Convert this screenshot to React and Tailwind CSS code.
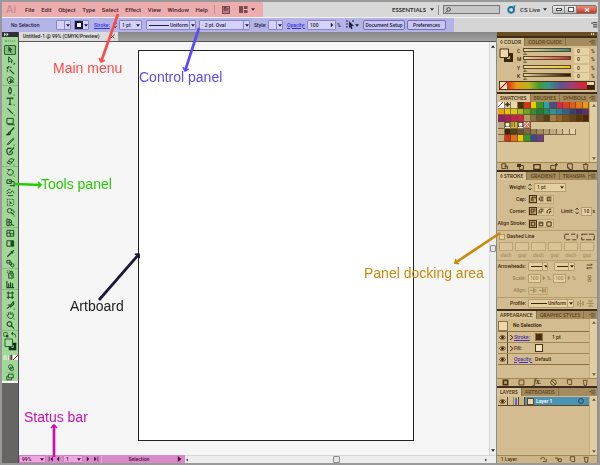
import clsx from "clsx";

const MENUS = ["File", "Edit", "Object", "Type", "Select", "Effect", "View", "Window", "Help"];

// each tool is drawn on a 10x10 grid; f = filled shape, s = stroked lines
const TOOL_GROUPS = [
  [
    { name: "Selection", f: "M3 0 L8 5 L5.8 5.2 L7 8 L5.8 8.6 L4.6 5.8 L3 7.4 Z" },
    { name: "Direct Selection", s: "M3 1 L7.5 5.5 L5.5 5.6 L6.5 8 M3 1 L3 7 L4.6 5.6 M8 9 L9.5 9 L9.5 7.5" },
    { name: "Magic Wand", s: "M4 4 L9 9 M3 0 V2 M1 3 H2.5 M5 2 L6 1 M1 1 L2 2 M2 5 L1 6", w: 1.3 },
    { name: "Lasso", s: "M2 6 C0 2 4 0 6.5 1.5 C10 3 8 6 5 6 C2 6 2 8 4 8.5 M5 3 L5 8 L6.5 6.8 L8.5 7 Z" },
  ],
  [
    { name: "Pen", s: "M4.5 0 C2.5 3 2.5 4 3 6 H6 C6.5 4 6.5 3 4.5 0 V4 M3 7.5 H6 M8.5 9 H9.5" },
    { name: "Type", s: "M1.5 2.5 V1.2 H7.5 V2.5 M4.5 1.2 V8 M3 8.2 H6 M8.5 9 H9.5", w: 1.3 },
    { name: "Line Segment", s: "M1.5 1.5 L7.5 7.5 M8.5 9 H9.5", w: 1.2 },
    { name: "Rectangle", s: "M1 1.5 H8 V7.5 H1 Z M2 8.5 H9 M8.5 9 H9.5" },
    { name: "Paintbrush", s: "M9 0.5 L4.5 5.5 M4.5 5.5 C3 5.5 3 7.5 1 8.5 C4 9 5.5 7.5 4.5 5.5", w: 1.5 },
    { name: "Pencil", s: "M8.5 1 L2.5 6.5 L1.5 8.5 L3.5 7.7 L9 2 M8.5 9 H9.5" },
    { name: "Blob Brush", s: "M9 0.5 L5 5 L3.5 6.5 M6 1.5 H2 C0 3 1 8 3 8.5 C6 9 7.5 7 7.5 5", w: 1.3 },
    { name: "Eraser", s: "M5.5 1.5 L9 3 L5 8 L1.2 6.5 Z M3 4.5 L6.8 6 M8.5 9 H9.5" },
  ],
  [
    { name: "Rotate", s: "M3 2 C6 0.5 8.5 3 8 5.5 C7 9 1.5 8.5 1.5 5 M1.5 1.5 L3.5 2 L2.5 3.8 M8.5 9 H9.5" },
    { name: "Scale", s: "M1 2 H6 V6 H1 Z M3 4 H9 V8.5 H4 M8.5 9 H9.5" },
    { name: "Width", s: "M1 7 C3 2 4 8 6 4 C7 2 8 4 9 6 M1 4 C3 0 4 3 5 1 M2 8.5 L8 8.5" },
    { name: "Free Transform", s: "M1.5 1.5 H8.5 M1.5 8.5 H8.5 M1.5 1.5 V8.5 M8.5 1.5 V8.5", dash: "1.2 1.2", f: "M4 3 L7 6 L5.3 6.2 L4 7.5 Z" },
    { name: "Shape Builder", s: "M4 5.5 A2.5 2.5 0 1 1 6.5 3 M5 5 A2 2 0 1 0 5.5 3 M5 4 L9 8 M8.5 9 H9.5" },
    { name: "Perspective Grid", s: "M1 1 L6 2.5 V8 L1 8.5 Z M1 4.5 L6 5 M3.5 2 V8 M6 7 L9 8.5" },
  ],
  [
    { name: "Mesh", s: "M1 1.5 H8.5 V8 H1 Z M1 5 C3 3 6 7 8.5 4.5 M4.5 1.5 C3 4 6 6 4.5 8" },
    { name: "Gradient", s: "M1 2 H8.5 V8 H1 Z", f: "M5 2 H8.5 V8 H5 Z" },
    { name: "Eyedropper", s: "M7 3 L2.5 7.5 L1.5 8.5 M5.5 2.5 L7.8 4.8 M7 3.2 L8.8 1.2", w: 1.5 },
    { name: "Blend", s: "M1 1.5 H4.5 V4.5 H1 Z M3.5 3.5 H6 V6 H3.5 M8.8 7 A1.7 1.7 0 1 1 5.4 7 A1.7 1.7 0 1 1 8.8 7" },
  ],
  [
    { name: "Symbol Sprayer", s: "M3 3.5 H8 V9 H3 Z M4.5 3.5 V1.5 H7 V3.5 M1 1 H2 M1 3 H2 M4 0.8 H3 M4.5 5.5 H6.5 V7.5" },
    { name: "Column Graph", s: "M1 1 V8.5 H9 M3 8 V4 M5 8 V2.5 M7.2 8 V3.5", w: 1.3 },
  ],
  [
    { name: "Artboard", s: "M2.5 0.5 V9 M7 0.5 V9 M0.8 2.2 H8.8 M0.8 7 H8.8" },
    { name: "Slice", s: "M8.5 0.5 L4 6 L1 8.5 M8.5 0.5 V3.5 L4.5 7 M2 4.5 H5 M8.5 9 H9.5", w: 1.2 },
    { name: "Hand", s: "M2 6 L1 4 M2 6 C3 9 7 9 8 6 L8 3 M3 4.5 L2.5 1.5 M4.8 4 V0.8 M6.5 4.2 L7 1.5 M8.5 9 H9.5" },
    { name: "Zoom", s: "M6.5 3.3 A2.6 2.6 0 1 1 1.3 3.3 A2.6 2.6 0 1 1 6.5 3.3 M5.8 5.3 L9 8.5", w: 1.3 },
  ],
];

const SWATCH_ROWS = [
  ["#fff", "#d8cfae", "#ecd9a8", "#4b2e0c", "#d3341c", "#eacb00", "#33982e", "#2fa0ac", "#4b4d86", "#cf2b4d", "#d8402a", "#e05a18", "#e5791a", "#e89a14"],
  ["#e9a30c", "#e6c400", "#d4cb12", "#a9bf1c", "#64a529", "#2f9132", "#1d7b3c", "#1e8c63", "#2a979a", "#2d7f9f", "#2f5f93", "#34407e", "#3c2d66", "#5b2f70"],
  ["#8a2368", "#a8205e", "#c3244f", "#d0264a", "#b69a68", "#8a7046", "#6e562f", "#574018", "#a77b46", "#91652f", "#7c521f", "#6b4314", "#5a360d", "#4a2a08"],
  ["#bda986", "#f6efd6", "#e0b02e", "#f0e7ee", "#dc7a68"],
  ["#c9b48a", "#3c260a", "#54401f", "#685431", "#7a6743", "#8d7a55", "#9f8c66", "#af9c75", "#beab83", "#cdba90", "#dac79d", "#e6d4aa"],
  ["#c9b48a", "#d3341c", "#e46e1a", "#eacb00", "#33982e", "#3a4a8c", "#6b3f86"],
];

const CHANNELS = [
  { key: "C", track: "bg-linear-to-r from-[#e6d3a6] to-[#1f9090]" },
  { key: "M", track: "bg-linear-to-r from-[#e6d3a6] to-[#c81444]" },
  { key: "Y", track: "bg-linear-to-r from-[#e6d3a6] to-[#eecb00]" },
  { key: "K", track: "bg-linear-to-r from-[#e6d3a6] to-[#2c1804]" },
];

function Glyph({ s, f, w = 1.1, dash, size = 10, className }) {
  return (
    <svg viewBox="0 0 10 10" width={size} height={size} className={clsx("shrink-0", className)} aria-hidden="true">
      {f && <path d={f} fill="currentColor" />}
      {s && <path d={s} fill="none" stroke="currentColor" strokeWidth={w} strokeDasharray={dash} />}
    </svg>
  );
}

function Caret({ className }) {
  return (
    <svg viewBox="0 0 5 3" width="4" height="3" className={clsx("shrink-0", className)} aria-hidden="true">
      <path d="M0 0 H5 L2.5 3 Z" fill="currentColor" />
    </svg>
  );
}

function Spinner() {
  return (
    <svg viewBox="0 0 4 8" width="4" height="8" className="shrink-0" aria-hidden="true">
      <path d="M0.5 3 L2 1 L3.5 3 M0.5 5 L2 7 L3.5 5" fill="none" stroke="currentColor" strokeWidth="0.8" />
    </svg>
  );
}

function Picker({ label, value, className, line, divided }) {
  return (
    <span className={clsx("flex shrink-0 items-center overflow-hidden rounded-[1px] border pl-[2px]", className)}>
      {line && <span className={clsx("h-px shrink-0 bg-current", line)} />}
      <select aria-label={label} defaultValue={value} className="min-w-0 flex-1 appearance-none bg-transparent outline-none">
        <option>{value}</option>
      </select>
      <span className={clsx("flex h-full w-[6px] shrink-0 items-center justify-center", divided && "border-l border-inherit")}>
        <Caret />
      </span>
    </span>
  );
}

function MenuBar() {
  return (
    <header className="flex h-[15px] shrink-0 items-stretch bg-[#d8d8d8] text-[6px]">
      <nav className="flex w-[261px] shrink-0 items-center bg-[#ebadad] pl-[4px] text-[#4f2626]">
        <span className="w-[19px] text-[11px] leading-none text-[#c98e8e]">Ai</span>
        <div className="flex w-[183px] justify-between">
          {MENUS.map((m) => (
            <button key={m}>{m}</button>
          ))}
        </div>
        <span className="ml-[6px] h-[9px] w-px bg-[#c98a8a]" />
        <button aria-label="Bridge" className="ml-[7px] flex h-[8px] w-[8px] items-center justify-center border border-[#7c4a4a] bg-[#b98080] text-[5px] leading-none">
          Br
        </button>
        <button aria-label="Arrange documents" className="ml-[9px] flex items-center gap-[3px]">
          <Glyph size={9} f="M0 1 H4.5 V9 H0 Z M5.5 1 H9.5 V4.5 H5.5 Z M5.5 5.5 H9.5 V9 H5.5 Z" className="text-[#7c4a4a]" />
          <Caret />
        </button>
      </nav>

      <div className="flex flex-1 items-center justify-end text-[#333]">
        <button className="flex items-center gap-[4px] font-[Lato] font-bold">
          ESSENTIALS <Caret />
        </button>
        <span className="ml-[4px] h-[10px] w-px bg-[#8f8f8f]" />
        <label className="ml-[4px] flex h-[9px] w-[57px] items-center border border-[#777] bg-[#c6c6c6] pl-px">
          <Glyph size={6} w={1.4} s="M9 4 A3 3 0 1 1 3 4 A3 3 0 1 1 9 4 M4 6.5 L1 9.5" />
          <input aria-label="Search" className="w-full min-w-0 bg-transparent outline-none" />
        </label>
        <svg viewBox="0 0 10 10" width="9" height="9" className="ml-[7px] shrink-0" aria-hidden="true">
          <circle cx="4.6" cy="5.4" r="3.2" fill="none" stroke="#15719f" strokeWidth="2" />
          <path d="M7 0.5 L9.5 0.5 L8.5 3.5" fill="#15719f" />
        </svg>
        <button className="ml-[4px] flex items-center gap-[3px]">
          CS Live <Caret />
        </button>
        <div className="mr-px ml-[5px] flex h-[9px] w-[45px] shrink-0 overflow-hidden rounded-[2px] border border-[#777]">
          <button aria-label="Minimize" className="flex w-[12px] items-center justify-center border-r border-[#888] bg-linear-to-b from-[#eee] to-[#b9b9b9]">
            <span className="h-[3px] w-[6px] border border-[#555] bg-white" />
          </button>
          <button aria-label="Restore" className="flex w-[12px] items-center justify-center border-r border-[#888] bg-linear-to-b from-[#eee] to-[#b9b9b9]">
            <span className="h-[5px] w-[6px] border border-[#555] bg-white" />
          </button>
          <button aria-label="Close" className="flex flex-1 items-center justify-center bg-linear-to-b from-[#eb8a78] to-[#c83214] text-white">
            <Glyph size={6} w={2} s="M1.5 2 L8.5 8 M8.5 2 L1.5 8" />
          </button>
        </div>
      </div>
    </header>
  );
}

function ControlPanel() {
  const field = "h-[10px] border-[#8a86c4] bg-[#d4d1fb]";
  return (
    <div className="flex h-[15px] shrink-0 items-stretch border-t border-[#f2f2f2] bg-[#d5d5d5]">
      <div className="flex w-[452px] shrink-0 items-center bg-[#b4b3e6] pl-[9px] whitespace-nowrap text-[#1c1c40]">
        <span className="w-[45px]">No Selection</span>
        <Picker label="Fill" value="" divided className={clsx(field, "w-[15px]")} />
        <button aria-label="Stroke color" className={clsx(field, "ml-[3px] flex w-[15px] items-center gap-px rounded-[1px] border")}>
          <span className="h-[8px] w-[8px] border-2 border-[#15153a] bg-white" />
          <Caret />
        </button>
        <a href="#stroke" className="ml-[5px] w-[19px] text-[#3532f0] underline">Stroke:</a>
        <Spinner />
        <Picker label="Stroke weight" value="1 pt" className={clsx(field, "ml-[2px] w-[23px]")} />
        <Picker label="Width profile" value="Uniform" line="mr-px w-[20px]" divided className={clsx(field, "ml-[4px] w-[50px]")} />
        <Picker label="Brush" value="·  2 pt. Oval" divided className={clsx(field, "ml-[3px] w-[51px]")} />
        <span className="ml-[4px] w-[14px]">Style:</span>
        <Picker label="Style" value="" divided className={clsx(field, "w-[15px]")} />
        <a href="#opacity" className="ml-[4px] w-[20px] text-[#3532f0] underline">Opacity:</a>
        <label className={clsx(field, "flex w-[29px] items-center rounded-[1px] border pl-[2px]")}>
          <input aria-label="Opacity" defaultValue="100" className="w-full min-w-0 bg-transparent outline-none" />
          <Glyph size={6} f="M3 1 L7 5 L3 9 Z" />
        </label>
        <span className="w-[9px] pl-px">%</span>
        <button aria-label="Select similar objects" className="flex w-[15px] items-center">
          <Glyph size={10} s="M1 1 H3 M1 4 H3 M7 1 H9 M1 7 H3" f="M4 1 L9 6 L6.6 6.3 L7.5 9 L6 9 L5.3 6.8 L4 8 Z" />
          <Caret />
        </button>
        <button className="ml-[3px] h-[10px] w-[42px] rounded-[2px] border border-[#7370ae] bg-[#c9c6f7]">Document Setup</button>
        <button className="ml-[2px] h-[10px] w-[39px] rounded-[2px] border border-[#7370ae] bg-[#c9c6f7]">Preferences</button>
      </div>
      <button aria-label="Panel menu" className="ml-auto">
        <Glyph size={7} s="M3 1 H9 M3 4 H9 M3 7 H9" f="M0 1 H3 L1.5 3 Z" />
      </button>
    </div>
  );
}

function ToolsPanel() {
  return (
    <aside className="flex w-[17px] shrink-0 flex-col border-r border-[#4b4960] bg-[#666563]">
      <div className="flex h-[5px] shrink-0 items-center bg-[#2f2f37] pl-[2px] text-[#ddd]">
        <Glyph size={5} f="M0 1 L4 5 L0 9 Z M5 1 L9 5 L5 9 Z" />
      </div>
      <div className="flex shrink-0 flex-col items-center border-b-2 border-white bg-[#a1d898] text-[#1d4a22]">
        <div className="flex h-[8px] items-center">
          <span className="h-[2px] w-[10px] border-y border-dotted border-[#76b06f]" />
        </div>
        {TOOL_GROUPS.map((group, g) => (
          <div key={g} className="flex w-full flex-col items-center border-b border-[#86bd7f]">
            {group.map((tool) => (
              <button
                key={tool.name}
                aria-label={tool.name}
                className={clsx(
                  "flex h-[10px] w-[12px] items-center justify-center",
                  tool.name === "Selection" && "rounded-[1px] border border-[#2e6233] bg-[#84bd7d]"
                )}
              >
                <Glyph {...tool} size={tool.name === "Selection" ? 8 : 9} />
              </button>
            ))}
          </div>
        ))}
        <div className="flex h-[7px] items-center gap-[2px]">
          <Glyph size={6} s="M1 1 H7 V7 H1 Z" f="M5 5 H9 V9 H5 Z" />
          <Glyph size={6} w={1.6} s="M1 3 C5 1 8 4 8 9 M3 0 L1 3 L4 5" />
        </div>
        <svg viewBox="0 0 13 13" width="13" height="13" aria-hidden="true">
          <path d="M6 6 H11 V11 H6 Z" fill="none" stroke="#16301a" strokeWidth="2.6" />
          <path d="M1 1 H8.5 V8.5 H1 Z" fill="#a9dc9f" stroke="#2e6233" />
        </svg>
        <div className="mt-[3px] flex h-[6px] items-center gap-px">
          <span className="h-[5px] w-[4px] bg-[#c3e8b9]" />
          <span className="h-[5px] w-[4px] bg-linear-to-r from-white to-[#333]" />
          <Glyph size={5} w={2} s="M0 10 L10 0" className="bg-white text-red-600" />
        </div>
        <button aria-label="Drawing mode" className="mt-[2px] flex h-[10px] items-center">
          <Glyph size={7} s="M8 4 A3 3 0 1 0 2 4 A3 3 0 1 0 8 4 M4.5 4.5 H9 V9 H4.5 Z" />
        </button>
        <button aria-label="Screen mode" className="flex h-[9px] items-center border-t border-[#86bd7f]">
          <Glyph size={8} s="M3 1.5 H9 V6 H3 Z M3 4 H1 V8.5 H7 V6" />
        </button>
      </div>
    </aside>
  );
}

function Panel({ tabs, children, grow }) {
  return (
    <section className={clsx("flex flex-col border-t-2 border-[#3f2c1c] bg-[#d3bc90]", grow ? "min-h-0 flex-1" : "shrink-0")}>
      <div className="flex h-[8px] shrink-0 items-stretch overflow-hidden bg-[#a58c5e] font-[Lato] leading-[8px] font-bold whitespace-nowrap text-[#5f471f]">
        {tabs.map((t, i) => (
          <button
            key={t}
            className={clsx("min-w-0 shrink-0 border-r border-[#8a7244] px-[3px]", i === 0 && "bg-[#d9c398] text-[#4a3312]")}
          >
            {t}
          </button>
        ))}
        <button aria-label="Panel menu" className="sticky right-0 ml-auto bg-[#a58c5e] pr-px">
          <Glyph size={7} s="M3 2 H9 M3 4.5 H9 M3 7 H9" f="M0 3 H3 L1.5 5 Z" />
        </button>
      </div>
      {children}
    </section>
  );
}

function ColorPanel() {
  return (
    <Panel tabs={["◊ COLOR", "COLOR GUIDE"]}>
      <div className="flex h-[35px]">
        <svg viewBox="0 0 16 18" width="16" height="18" className="mt-[2px] ml-[2px] shrink-0" aria-hidden="true">
          <path d="M6.5 6.5 H12.5 V12.5 H6.5 Z" fill="none" stroke="#3f2508" strokeWidth="3" />
          <path d="M1 1 H9.5 V9.5 H1 Z" fill="#ecd8ab" stroke="#4a3312" />
        </svg>
        <div className="flex flex-1 flex-col pt-px pl-[2px]">
          {CHANNELS.map((c) => (
            <div key={c.key} className="flex flex-1 items-center">
              <span className="w-[6px]">{c.key}</span>
              <div className="flex flex-1 flex-col items-start">
                <div className={clsx("h-[4px] w-full border border-[#5f471f]", c.track)} />
                <svg viewBox="0 0 4 3" width="4" height="3" aria-hidden="true">
                  <path d="M0.5 2.5 L2 0.5 L3.5 2.5 Z" fill="#ecd8ab" stroke="#4a3312" strokeWidth="0.6" />
                </svg>
              </div>
              <input aria-label={c.key} defaultValue="0" className="ml-[3px] h-[7px] w-[15px] bg-[#e6d2a5] pl-[3px] outline-none" />
              <span className="w-[8px] pl-[2px]">%</span>
            </div>
          ))}
        </div>
      </div>
      <div className="mx-[2px] mb-[2px] flex h-[9px] border border-[#4a3312]">
        <Glyph size={7} w={1.5} s="M0 10 L10 0" className="bg-[#f4e6c4] text-red-700" />
        <div className="flex-1 bg-[linear-gradient(90deg,#dd2a18,#e79a18_12%,#b7b41c_27%,#4c9a2e_40%,#2f9a8a_52%,#5b5590_66%,#a53c72_82%,#e2202e)]" />
        <div className="w-[7px] bg-linear-to-b from-[#ecd8ab] from-50% to-[#3a2205] to-50%" />
      </div>
    </Panel>
  );
}

function SwatchesPanel() {
  return (
    <Panel tabs={["SWATCHES", "BRUSHES", "SYMBOLS"]}>
      <div className="flex h-[60px] bg-[#d8c497]">
        <div className="flex h-[40px] flex-1 flex-col pl-px">
          {SWATCH_ROWS.map((row, r) => (
            <div key={r} className="grid flex-1 grid-cols-14">
              {row.map((color, i) => (
                <button
                  key={i}
                  aria-label={`Swatch ${color}`}
                  className="border-r border-b border-[#5f471f]/70"
                  style={{ backgroundColor: color }}
                >
                  {r === 0 && i === 0 && <Glyph size={5} w={1.8} s="M0 10 L10 0" className="text-red-700" />}
                  {r === 0 && i === 1 && <Glyph size={5} w={1.6} s="M5 0 V10 M0 5 H10 M2 5 A3 3 0 1 1 8 5 A3 3 0 1 1 2 5" />}
                  {r === 3 && (i === 1 || i === 3) && <Glyph size={5} w={2.5} s="M0 0 H10 V10 H0 Z" />}
                  {r === 3 && i === 2 && <Glyph size={5} w={2} s="M2 0 V10 M7 0 V10" className="text-[#4c7a2e]" />}
                  {r === 3 && i === 4 && <Glyph size={5} w={2} s="M0 0 L10 10 M10 0 L0 10" className="text-[#f5e3d0]" />}
                </button>
              ))}
            </div>
          ))}
        </div>
        <ScrollTrack />
      </div>
      <Footer>
        <Glyph size={8} s="M1 1 H6 V7 H1 Z M4 4 H8 V8 M9 9 H10" />
        <Glyph size={8} s="M3 3 H8 V8 H3 Z" f="M0 1 H5 V5 H0 Z" />
        <Glyph size={8} w={1.6} s="M1 2 H9 V8 H1 Z" />
        <Glyph size={8} s="M1 3 H7 V8 H1 Z M8 0 V4 M6 2 H10" />
        <Glyph size={8} s="M2 1 H8 V8 H4 L2 6 Z M4 8 V6 H2" />
        <Glyph size={8} s="M1 2 H8 M2 3 L3 9 H6.5 L7 3 M3.5 1 H6" />
      </Footer>
    </Panel>
  );
}

function ScrollTrack() {
  return (
    <div className="flex w-[8px] shrink-0 flex-col items-center justify-between border-l border-[#c4ab7c] bg-[#e0cda1] py-[2px] text-[#6e562f]">
      <Caret className="rotate-180" />
      <Caret />
    </div>
  );
}

function Footer({ children, note }) {
  return (
    <div className="flex h-[8px] shrink-0 items-center justify-around border-t border-[#a08856] bg-[#cdb485] pr-[3px] text-[#4a3312]">
      {note && <span className="mr-[16px]">{note}</span>}
      {children}
    </div>
  );
}

function IconTrio({ paths, name }) {
  return (
    <div className="ml-[2px] flex h-[9px] w-[26px] items-center justify-around border border-[#bfa674] bg-[#dcc79b]">
      {paths.map((p, i) => (
        <button key={i} aria-label={`${name} ${i + 1}`} className={clsx("flex h-[8px] w-[8px] items-center justify-center", i === 0 && "border border-[#4a3312] bg-[#c1a877]")}>
          <Glyph size={6} w={1.6} s={p} />
        </button>
      ))}
    </div>
  );
}

function StrokePanel() {
  const label = "w-[29px] shrink-0 text-right";
  const box = "h-[9px] border-[#b59c6a] bg-[#e4d0a3]";
  const corners = ["M2 9 V2 H9 M5 9 V5 H9", "M2 9 V4 L4 2 H9 M5 9 V5 H9", "M2 9 L2 5 L5 2 H9 M6 9 V6 H9"];
  return (
    <Panel tabs={["◊ STROKE", "GRADIENT", "TRANSPA"]}>
      <div className="whitespace-nowrap">
        <div className="flex h-[13px] items-center pt-px">
          <label htmlFor="weight" className={label}>Weight:</label>
          <span className="mx-[2px]"><Spinner /></span>
          <span className={clsx(box, "flex w-[32px] items-center border pr-px pl-[2px]")}>
            <select id="weight" className="min-w-0 flex-1 appearance-none bg-transparent outline-none">
              <option>1 pt</option>
            </select>
            <Caret />
          </span>
        </div>
        <div className="flex h-[12px] items-center">
          <span className={label}>Cap:</span>
          <IconTrio name="Cap" paths={["M3 2 H9 V4 M3 2 V8 M5 4 V9", "M9 2 H4 C1 3 1 7 4 8 H9 M4 5 H9", "M9 2 H2 V8 H9 M4 5 H9"]} />
        </div>
        <div className="flex h-[12px] items-center">
          <span className={label}>Corner:</span>
          <IconTrio name="Corner" paths={corners} />
          <label htmlFor="limit" className="mr-px ml-[7px]">Limit:</label>
          <Spinner />
          <input id="limit" defaultValue="10" className={clsx(box, "ml-[2px] w-[11px] border pl-[2px] outline-none")} />
          <span className="ml-px">x</span>
        </div>
        <div className="flex h-[13px] items-center">
          <span className={label}>Align Stroke:</span>
          <IconTrio name="Align stroke" paths={["M2 2 H8 V8 H2 Z", "M2 2 H8 V8 H2 Z M4 4 H6", "M1.5 1.5 H8.5 V8.5 H1.5 Z"]} />
        </div>

        <div className="flex h-[12px] items-center border-t border-[#b59c6a] px-[2px]">
          <label className="flex items-center gap-[2px]">
            <input type="checkbox" className="h-[6px] w-[6px] appearance-none border border-[#b0976a] bg-[#e4d0a3]" />
            Dashed Line
          </label>
          <Glyph size={14} dash="3 1.5" w={0.6} s="M0.5 3 H9.5 V7 H0.5 Z" className="ml-auto" />
          <Glyph size={14} dash="4 1" w={0.6} s="M0.5 3 H9.5 V7 H0.5 Z" className="ml-[3px]" />
        </div>
        <div className="grid grid-cols-6 gap-[2px] pr-[3px] pl-[2px] text-center text-[#ab925f]">
          {["dash", "gap", "dash", "gap", "dash", "gap"].map((t, i) => (
            <label key={i} className="flex flex-col leading-[8px]">
              <input disabled aria-label={t} className="h-[9px] w-full min-w-0 border border-[#bda473] bg-[#d9c497]" />
              {t}
            </label>
          ))}
        </div>

        <div className="mt-px flex h-[12px] items-center border-t border-[#b59c6a]">
          <span className={label}>Arrowheads:</span>
          <Picker label="Start arrowhead" value="" line="w-[11px]" divided className={clsx(box, "ml-[2px] w-[20px]")} />
          <Picker label="End arrowhead" value="" line="w-[11px]" divided className={clsx(box, "ml-[6px] w-[21px]")} />
          <Glyph size={7} s="M1 3 H9 L7 1 M9 7 H1 L3 9" className="mr-[4px] ml-auto" />
        </div>
        <div className="flex h-[12px] items-center text-[#9c8350]">
          <span className={label}>Scale:</span>
          <input aria-label="Start scale" defaultValue="100" className={clsx(box, "ml-[2px] w-[13px] border pl-px")} />
          <Glyph size={6} f="M3 1 L7 5 L3 9 Z" />
          <span className="w-[6px]">%</span>
          <input aria-label="End scale" defaultValue="100" className={clsx(box, "w-[13px] border pl-px")} />
          <Glyph size={6} f="M3 1 L7 5 L3 9 Z" />
          <span>%</span>
          <Glyph size={7} w={1.4} s="M3 1 H7 V4 H3 Z M3 6 H7 V9 H3 Z M5 3 V7" className="mr-[4px] ml-auto" />
        </div>
        <div className="flex h-[13px] items-center text-[#9c8350]">
          <span className={label}>Align:</span>
          <div className="ml-[2px] flex h-[8px] w-[20px] items-center justify-around border border-[#bda473]">
            <Glyph size={7} s="M0 5 H7 M5 2 L9 5 L5 8 Z" />
            <Glyph size={7} s="M0 5 H7 M5 2 L9 5 L5 8 Z M9.5 1 V9" />
          </div>
        </div>
        <div className="flex h-[12px] items-center border-t border-[#b59c6a]">
          <span className={label}>Profile:</span>
          <Picker label="Profile" value="Uniform" line="mr-px w-[16px]" divided className={clsx(box, "ml-[2px] w-[46px]")} />
          <Glyph size={7} s="M5 0 V10 M1 2 V8 L3.5 5 Z M9 2 V8 L6.5 5 Z" className="ml-[3px] text-[#9c8350]" />
          <Glyph size={7} s="M0 5 H10 M2 1 H8 L5 3.5 Z M2 9 H8 L5 6.5 Z" className="ml-[3px] text-[#9c8350]" />
        </div>
      </div>
    </Panel>
  );
}

function Eye() {
  return (
    <button aria-label="Toggle visibility" className="flex h-full w-[10px] shrink-0 items-center justify-center border-r border-[#5f471f]">
      <Glyph size={7} s="M0.5 5 C2.5 1.5 7.5 1.5 9.5 5 C7.5 8.5 2.5 8.5 0.5 5 Z" f="M3 5 A2 2 0 1 1 7 5 A2 2 0 1 1 3 5" />
    </button>
  );
}

function AppearancePanel() {
  return (
    <Panel tabs={["APPEARANCE", "GRAPHIC STYLES"]}>
      <div className="flex h-[59px]">
        <div className="flex flex-1 flex-col pt-px pl-px">
          <div className="flex h-[12px] items-center border-b border-[#8a7244] font-bold">
            <span className="mr-[5px] h-[10px] w-[10px] border border-[#8a7244] bg-[#ecd8ab]" />
            No Selection
          </div>
          <div className="flex h-[11px] items-center border-b border-[#a08856]">
            <Eye />
            <Glyph size={5} w={2} s="M2 0 L8 5 L2 10" className="ml-px" />
            <a href="#stroke" className="w-[21px] text-[#4b2fb0] underline">Stroke:</a>
            <span className="h-[8px] w-[8px] border border-[#8a7244] bg-[#4b2e0c]" />
            <span className="ml-[9px]">1 pt</span>
          </div>
          <div className="flex h-[11px] items-center border-b border-[#a08856]">
            <Eye />
            <Glyph size={5} w={2} s="M2 0 L8 5 L2 10" className="ml-px" />
            <span className="w-[21px]">Fill:</span>
            <span className="h-[8px] w-[8px] border border-[#4a3312] bg-[#f2e2bd]" />
          </div>
          <div className="flex h-[11px] items-center border-b border-[#8a7244]">
            <Eye />
            <a href="#opacity" className="ml-[6px] w-[21px] text-[#4b2fb0] underline">Opacity:</a>
            <span>Default</span>
          </div>
        </div>
        <ScrollTrack />
      </div>
      <Footer>
        <Glyph size={7} w={2.4} s="M2 2 H8 V8 H2 Z" />
        <Glyph size={7} s="M1.5 1.5 H8.5 V8.5 H1.5 Z" />
        <span className="font-serif text-[7px] leading-none font-bold italic">fx.</span>
        <Glyph size={7} s="M1 5 A4 4 0 1 1 9 5 A4 4 0 1 1 1 5 M2 2 L8 8" />
        <Glyph size={7} s="M2 1 H8 V8 H4 L2 6 Z" />
        <Glyph size={7} s="M1 2 H8 M2 3 L3 9 H6.5 L7 3" />
      </Footer>
    </Panel>
  );
}

function LayersPanel() {
  return (
    <Panel tabs={["LAYERS", "ARTBOARDS"]} grow>
      <div className="flex min-h-0 flex-1">
        <div className="flex-1 pt-px pl-px">
          <div className="flex h-[9px] items-center border-b border-[#5f471f]">
            <Eye />
            <span className="h-full w-[6px] border-r border-[#a08856]" />
            <span className="ml-px h-[7px] w-[2px] bg-[#5566d8]" />
            <span className="ml-px h-full w-[7px] border-r border-l border-[#5f471f] bg-[#cdb485]" />
            <div className="flex h-full flex-1 items-center bg-[#4b93b4] font-bold text-[#eef4ee]">
              <span className="mx-[2px] h-[7px] w-[7px] border border-[#5f471f] bg-[#ecd8ab]" />
              Layer 1
              <Glyph size={6} w={1.4} s="M1 5 A4 4 0 1 1 9 5 A4 4 0 1 1 1 5" className="mr-[5px] ml-auto text-[#1b3846]" />
            </div>
          </div>
        </div>
        <ScrollTrack />
      </div>
      <Footer note="1 Layer">
        <Glyph size={7} s="M1 5 A3 3 0 1 1 7 5 M4 8 H9 V4" />
        <Glyph size={7} s="M0 3 H4 V7 M5 4 H9 V8 H5 Z" />
        <Glyph size={7} s="M2 1 H8 V8 H4 L2 6 Z" />
        <Glyph size={7} s="M1 2 H8 M2 3 L3 9 H6.5 L7 3" />
      </Footer>
    </Panel>
  );
}

function StatusBar() {
  return (
    <footer className="flex h-[8px] shrink-0 items-stretch bg-[#ececec]">
      <div className="flex w-[166px] shrink-0 items-center bg-[#d98ac9] text-[#4a0f42]">
        <Picker label="Zoom level" value="99%" className="h-[8px] w-[27px] border-[#d07cc0] bg-[#eda6e0]" />
        <Glyph size={6} s="M2 1 V9" f="M8 1 L4 5 L8 9 Z" className="ml-[2px]" />
        <Glyph size={6} f="M7 1 L3 5 L7 9 Z" className="ml-px" />
        <Picker label="Artboard" value="1" className="ml-[2px] h-[8px] w-[20px] border-[#d07cc0] bg-[#eda6e0]" />
        <Glyph size={6} f="M3 1 L7 5 L3 9 Z" className="ml-[2px]" />
        <Glyph size={6} s="M8 1 V9" f="M2 1 L6 5 L2 9 Z" className="ml-[2px]" />
        <button className="ml-[2px] flex h-[7px] flex-1 items-center border-l border-[#e8a6db] pr-[3px]">
          <span className="flex-1">Selection</span>
          <Glyph size={6} f="M3 0 L9 5 L3 10 Z" />
        </button>
      </div>
      <div className="flex flex-1 items-center border-t border-[#d5d5d5] pr-[8px] text-[#222]">
        <Glyph size={4} f="M7 1 L3 5 L7 9 Z" />
        <span className="mx-auto h-[7px] w-[7px] rounded-[1px] border border-[#8e8e8e] bg-[#e4e4e4]" />
        <Glyph size={4} f="M3 1 L7 5 L3 9 Z" />
      </div>
    </footer>
  );
}

function Document() {
  return (
    <main className="flex min-w-0 flex-1 flex-col">
      <div className="flex h-[10px] shrink-0 items-end border-b border-[#555] bg-linear-to-b from-[#858585] to-[#a3a3a3]">
        <div className="flex h-[9px] w-[99px] items-center bg-[#dcdcdc] pl-[4px] whitespace-nowrap text-[#222]">
          Untitled-1 @ 99% (CMYK/Preview)
          <button aria-label="Close tab" className="mr-[3px] ml-auto">
            <Glyph size={5} w={1.5} s="M1 1 L9 9 M9 1 L1 9" />
          </button>
        </div>
      </div>
      <div className="flex min-h-0 flex-1">
        <div className="flex flex-1 bg-[#f6f6f6] pt-[8px] pr-[75px] pb-[14px] pl-[119px]">
          <div className="flex-1 border border-[#222] bg-white" />
        </div>
        <div className="flex w-[7px] shrink-0 flex-col items-center justify-between border-l border-[#d5d5d5] bg-[#ececec] py-[3px] text-[#222]">
          <Caret className="rotate-180" />
          <span className="h-[7px] w-[6px] rounded-[1px] border border-[#8e8e8e] bg-[#e4e4e4]" />
          <Caret />
        </div>
      </div>
      <StatusBar />
    </main>
  );
}

const CALLOUTS = [
  { text: "Main menu", place: "top-[60px] left-[53px] text-[#ff4a4a]", color: "#ff4a4a", from: [118, 14], to: [101, 62] },
  { text: "Control panel", place: "top-[69px] left-[139px] text-[#5a4bf5]", color: "#5a4bf5", from: [199, 28], to: [185, 71] },
  { text: "Tools panel", place: "top-[176px] left-[41px] text-[#25cc00]", color: "#25cc00", from: [15, 184], to: [41, 185] },
  { text: "Panel docking area", place: "top-[265px] left-[364px] text-[#c88a0c]", color: "#c88a0c", from: [500, 233], to: [455, 263] },
  { text: "Artboard", place: "top-[298px] left-[70px] text-[#222]", color: "#1c1838", from: [99, 300], to: [139, 254] },
  { text: "Status bar", place: "top-[409px] left-[24px] text-[#cc0fb0]", color: "#cc0fb0", from: [54, 457], to: [54, 425] },
];

// labels and arrows laid over the workspace
function Callouts() {
  return (
    <div className="pointer-events-none absolute inset-0 font-['Liberation_Sans',sans-serif] text-[14px] leading-[16px] whitespace-nowrap">
      <svg width="600" height="465" viewBox="0 0 600 465" className="absolute top-0 left-0" aria-hidden="true">
        {CALLOUTS.map(({ text, color, from, to }) => {
          const angle = (Math.atan2(to[1] - from[1], to[0] - from[0]) * 180) / Math.PI;
          return (
            <g key={text} stroke={color} fill="none">
              <path d={`M${from} L${to}`} strokeWidth="2.7" />
              <path d="M-3 -3 L0 0 L-3 3" strokeWidth="1.6" transform={`translate(${to}) rotate(${angle})`} />
            </g>
          );
        })}
      </svg>
      {CALLOUTS.map((c) => (
        <span key={c.text} className={clsx("absolute", c.place)}>
          {c.text}
        </span>
      ))}
    </div>
  );
}

export default function App() {
  return (
    <div className="relative overflow-hidden">
      <div className="flex h-screen w-full flex-col border-2 border-[#999] bg-[#d8d8d8] font-[Roboto,sans-serif] text-[5px] leading-[7px] font-medium">
        <MenuBar />
        <ControlPanel />
        <div className="flex min-h-0 flex-1">
          <ToolsPanel />
          <Document />
          <aside className="flex w-[102px] shrink-0 flex-col border-r border-l border-[#8a8a8a] text-[#3d2809]">
            <div className="flex h-[4px] shrink-0 items-center justify-end bg-[#6a4d20] pr-[2px] text-[#e0cda1]">
              <Glyph size={4} f="M0 1 L4 5 L0 9 Z M5 1 L9 5 L5 9 Z" />
            </div>
            <ColorPanel />
            <SwatchesPanel />
            <StrokePanel />
            <AppearancePanel />
            <LayersPanel />
          </aside>
        </div>
      </div>
      <Callouts />
    </div>
  );
}
